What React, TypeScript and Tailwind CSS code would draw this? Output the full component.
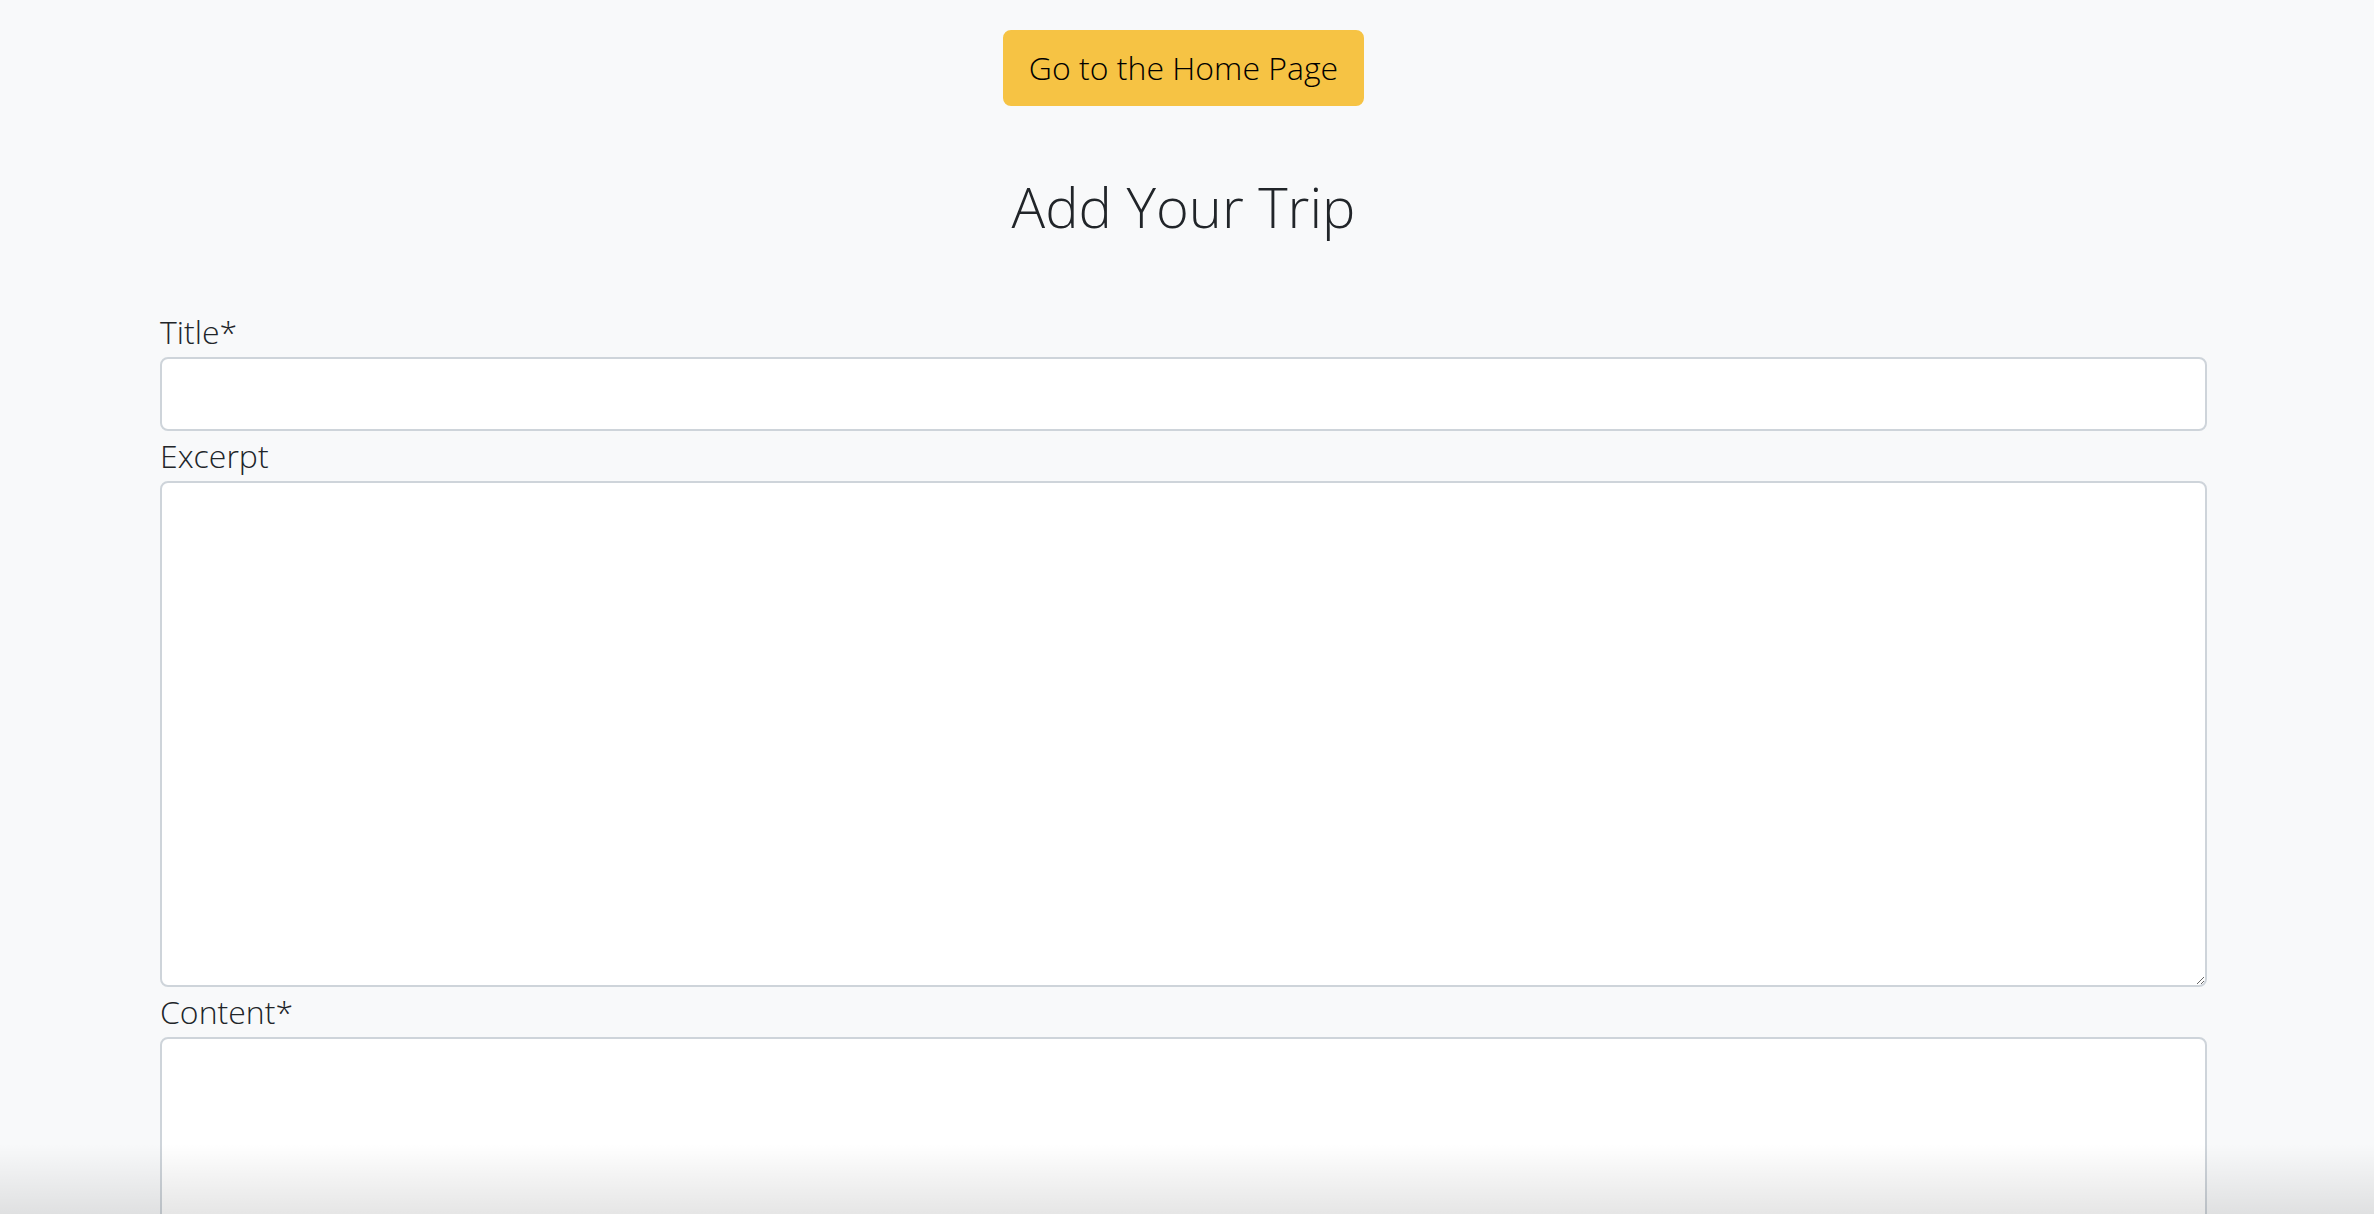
import React from 'react';

const fieldClass =
    'block w-full rounded-[8px] border-2 border-[#ced4da] bg-white px-[24px] py-[12px] text-[32px] leading-[48px] text-[#212529] outline-none';

const labelClass = 'mb-[1px] block pt-[1px] text-[32px] leading-[48px]';

export default function App() {
    return (
        <div
            className="relative h-screen overflow-hidden bg-[#f8f9fa] text-[#212529] font-light"
            style={{ fontFamily: '"Open Sans", "Noto Sans", sans-serif' }}
        >
            <div className="w-[2367px]">
                <div className="flex justify-center pt-[30px]">
                    <button className="rounded-[8px] border-2 border-[#f6c344] bg-[#f6c344] px-[24px] py-[12px] text-[32px] leading-[48px] font-light text-black">
                        Go to the Home Page
                    </button>
                </div>

                <h1 className="mt-[67px] text-center text-[56px] leading-[67px] font-light">Add Your Trip</h1>

                <form className="mx-auto mt-[67px] w-[2047px]">
                    <label className={labelClass}>Title*</label>
                    <input type="text" className={`${fieldClass} h-[74px]`} />

                    <label className={labelClass}>Excerpt</label>
                    <textarea className={`${fieldClass} h-[506px]`} />

                    <label className={labelClass}>Content*</label>
                    <textarea className={`${fieldClass} h-[506px]`} />
                </form>
            </div>

            {/* bottom fade */}
            <div className="pointer-events-none absolute inset-x-0 bottom-0 h-[70px] bg-gradient-to-b from-transparent to-black/10" />
        </div>
    );
}
